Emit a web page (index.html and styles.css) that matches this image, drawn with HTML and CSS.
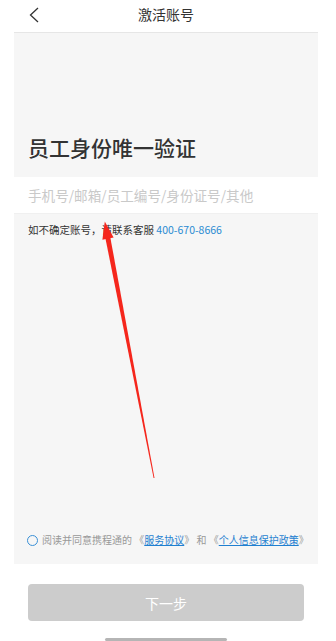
FILE: index.html
```html
<!DOCTYPE html>
<html lang="zh-CN">
<head>
<meta charset="utf-8">
<title>激活账号</title>
<link rel="stylesheet" href="styles.css">
</head>
<body>
<div class="app">
  <header class="nav">
    <svg class="back" width="12" height="16" viewBox="0 0 12 16"><path d="M10 1 L2.5 8 L10 15" fill="none" stroke="#333" stroke-width="1.3"/></svg>
    <span class="nav-title">激活账号</span>
  </header>
  <main class="panel">
    <div class="hero"><h1 class="heading">员工身份唯一验证</h1></div>
    <div class="input-row"><span class="placeholder">手机号/邮箱/员工编号/身份证号/其他</span></div>
    <p class="hint">如不确定账号，请联系客服 <span class="phone">400-670-8666</span></p>
    <div class="agree">
      <span class="radio"></span>
      <span class="agree-text">阅读并同意携程通的 《<a class="link">服务协议</a>》 和 《<a class="link">个人信息保护政策</a>》</span>
    </div>
  </main>
  <div class="actions"><button class="next">下一步</button></div>
  <div class="home-bar"></div>
  <svg class="arrow" width="336" height="641" viewBox="0 0 336 641">
    <polygon points="105.2,237.2 110.1,236.2 154.5,477.9 153.6,478.1" fill="#f5261c"/>
    <polygon points="104.8,221.5 113.6,237.6 102.4,239.8" fill="#f5261c"/>
  </svg>
</div>
</body>
</html>
```
FILE: styles.css
```css
* { box-sizing: border-box; }
html, body { margin: 0; padding: 0; background: #fff; }
body { font-family: "Noto Sans CJK SC", "Noto Sans", sans-serif; color: #333; }
.app { position: relative; width: 332px; height: 641px; overflow: hidden; display: flex; flex-direction: column; }
.nav { height: 32px; position: relative; display: flex; align-items: center; justify-content: center; }
.back { position: absolute; left: 28px; top: 7px; }
.nav-title { font-size: 14px; line-height: 20px; color: #333; margin-top: -3px; }
.panel { margin: 0 14px; height: 534px; background: #f6f6f6; border-top: 1px solid #e6e6e6; display: flex; flex-direction: column; }
.hero { padding: 100px 14px 15px; }
.heading { margin: 0; font-size: 21px; line-height: 29px; font-weight: 500; color: #333; }
.input-row { height: 37px; background: #fff; padding-left: 14px; display: flex; align-items: center; border-bottom: 1px solid #f0f0f0; }
.placeholder { font-size: 13.6px; color: #c9c9c9; line-height: 20px; }
.hint { margin: 8px 0 0; padding-left: 14px; font-size: 10.5px; line-height: 16px; color: #333; }
.phone { color: #2a8bd2; }
.agree { margin-top: auto; padding: 0 0 16px 13px; display: flex; align-items: center; height: 32px; }
.radio { width: 11px; height: 11px; border: 1px solid #3a90d6; border-radius: 50%; margin-right: 4px; flex: none; }
.agree-text { font-size: 10px; line-height: 16px; color: #999; white-space: nowrap; }
.link { color: #1f7fd0; text-decoration: underline; }
.actions { padding: 20px 28px 0; }
.next { width: 100%; height: 37px; border: 0; border-radius: 4px; background: #cccccc; color: #fff; font-family: inherit; font-size: 14px; padding: 0; }
.home-bar { margin: 17px auto 0; width: 122px; height: 3px; background: #b5b5b5; border-radius: 2px; }
.arrow { position: absolute; left: 0; top: 0; pointer-events: none; }
```
